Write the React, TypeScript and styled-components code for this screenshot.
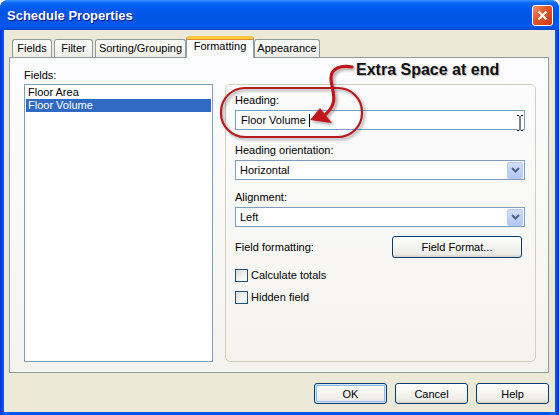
import React from "react";
import styled, { createGlobalStyle } from "styled-components";

const GlobalStyle = createGlobalStyle`
  html, body {
    margin: 0;
    padding: 0;
    background: #ffffff;
  }
  body {
    font-family: "Liberation Sans", Arial, sans-serif;
    font-size: 11px;
    color: #000;
  }
`;

const Window = styled.div`
  position: relative;
  width: 559px;
  height: 415px;
  display: flex;
  flex-direction: column;
  background: linear-gradient(90deg, #0831d9 0%, #166aee 1%, #0055e5 2%, #0055e5 98%, #166aee 99%, #0831d9 100%);
  border-radius: 8px 8px 0 0;
  overflow: hidden;
`;

const TitleBar = styled.div`
  flex: none;
  height: 30px;
  display: flex;
  align-items: center;
  justify-content: space-between;
  padding: 0 6px 0 7px;
  background: linear-gradient(
    180deg,
    #3d95ff 0%,
    #0a66f2 10%,
    #0058ee 30%,
    #0054e3 60%,
    #0058ee 90%,
    #0047c8 100%
  );
`;

const Title = styled.span`
  color: #fff;
  font: bold 13px "Liberation Sans", Arial, sans-serif;
  text-shadow: 1px 1px #0a1883;
`;

const CloseButton = styled.div`
  width: 21px;
  height: 21px;
  box-sizing: border-box;
  border: 1px solid #ffffff;
  border-radius: 3px;
  background: linear-gradient(135deg, #f0906c 0%, #e2542a 45%, #cc3a10 100%);
  display: flex;
  align-items: center;
  justify-content: center;
`;

const Client = styled.div`
  flex: 1;
  margin: 0 4px 3px 4px;
  background: #ece9d8;
  padding: 6px 6px 8px 5px;
  display: flex;
  flex-direction: column;
`;

const TabRow = styled.div`
  display: flex;
  align-items: flex-end;
  height: 21px;
  gap: 2px;
  padding-left: 3px;
  position: relative;
  z-index: 1;
`;

const Tab = styled.div<{ $w: number; $active?: boolean }>`
  width: ${(p) => p.$w}px;
  box-sizing: border-box;
  text-align: center;
  border: 1px solid #919b9c;
  border-bottom: none;
  border-radius: 3px 3px 0 0;
  ${(p) =>
    p.$active
      ? `
    height: 22px;
    margin: 0 -2px -1px -2px;
    background: #fcfcfe;
    border-top: 3px solid #ffc73c;
    box-shadow: inset 0 1px 0 #e68b2c;
    line-height: 15px;
  `
      : `
    height: 18px;
    background: linear-gradient(180deg, #ffffff 0%, #f7f7f3 50%, #ecebe6 100%);
    line-height: 17px;
  `}
`;

const Panel = styled.div`
  height: 316px;
  box-sizing: border-box;
  border: 1px solid #919b9c;
  background: linear-gradient(180deg, #fcfcfe 0%, #f8f8f6 50%, #f4f3ee 100%);
  padding: 11px 12px 10px 14px;
  display: grid;
  grid-template-columns: 189px 311px;
  grid-template-rows: 13px 1fr;
  column-gap: 12px;
  row-gap: 2px;
`;

const Label = styled.div`
  line-height: 13px;
  white-space: nowrap;
`;

const FieldList = styled.div`
  grid-column: 1;
  grid-row: 2;
  border: 1px solid #7f9db9;
  background: #fff;
  padding: 1px;
`;

const ListItem = styled.div<{ $selected?: boolean }>`
  height: 13px;
  line-height: 13px;
  padding-left: 2px;
  background: ${(p) => (p.$selected ? "#316ac5" : "transparent")};
  color: ${(p) => (p.$selected ? "#fff" : "#000")};
`;

const Group = styled.div`
  grid-column: 2;
  grid-row: 2;
  border: 1px solid #d0d0bf;
  border-radius: 5px;
  padding: 9px 10px 0 9px;
  display: flex;
  flex-direction: column;
`;

const GroupLabel = styled(Label)<{ $gap: number }>`
  margin-top: ${(p) => p.$gap}px;
`;

const TextInput = styled.div`
  margin-top: 3px;
  height: 20px;
  box-sizing: border-box;
  border: 1px solid #7f9db9;
  background: #fff;
  padding-left: 5px;
  display: flex;
  align-items: center;
`;

// the heading text ends in a space, so the caret sits one space away
const Caret = styled.span`
  display: inline-block;
  width: 1px;
  height: 13px;
  margin-left: 3px;
  background: #000;
`;

const Select = styled.div`
  margin-top: 3px;
  height: 20px;
  box-sizing: border-box;
  border: 1px solid #7f9db9;
  background: #fff;
  padding: 0 1px 0 4px;
  display: flex;
  align-items: center;
  justify-content: space-between;
`;

const DropButton = styled.div`
  width: 16px;
  height: 17px;
  box-sizing: border-box;
  border: 1px solid #b9caef;
  border-radius: 2px;
  background: linear-gradient(180deg, #d2defc 0%, #c1d3fb 50%, #b2c7f6 100%);
  display: flex;
  align-items: center;
  justify-content: center;
`;

const FormatRow = styled.div`
  margin-top: 9px;
  display: flex;
  align-items: center;
  justify-content: space-between;
  padding-right: 3px;
`;

const Button = styled.div<{ $w: number; $default?: boolean }>`
  width: ${(p) => p.$w}px;
  height: ${(p) => (p.$default !== undefined ? 21 : 22)}px;
  box-sizing: border-box;
  border: 1px solid #003c74;
  border-radius: 3px;
  background: linear-gradient(180deg, #ffffff 0%, #f5f5f1 45%, #ecebe6 85%, #d6d0c5 100%);
  display: flex;
  align-items: center;
  justify-content: center;
  box-shadow: ${(p) =>
    p.$default ? "inset 0 0 0 1px #cee7ff, inset 0 0 0 2px #98b8ea" : "none"};
`;

const CheckRow = styled.label<{ $gap: number }>`
  margin-top: ${(p) => p.$gap}px;
  display: flex;
  align-items: center;
  gap: 3px;
  line-height: 13px;
`;

const CheckBox = styled.span`
  width: 13px;
  height: 13px;
  box-sizing: border-box;
  border: 1px solid #1c5180;
  background: linear-gradient(135deg, #dcdcd7 0%, #f4f4f0 60%, #ffffff 100%);
`;

const ButtonRow = styled.div`
  margin-top: 10px;
  display: flex;
  justify-content: flex-end;
  gap: 8px;
`;

const Overlay = styled.svg`
  position: absolute;
  left: 0;
  top: 0;
  pointer-events: none;
`;

const Callout = styled.div`
  position: absolute;
  left: 356px;
  top: 60px;
  font: bold 16px/19px "Liberation Sans", Arial, sans-serif;
  color: #111;
  white-space: nowrap;
  text-shadow: 1px 1px 1px rgba(0, 0, 0, 0.25);
`;

const Chevron = () => (
  <svg width="9" height="6" viewBox="0 0 9 6">
    <path d="M1 1 L4.5 4.5 L8 1" fill="none" stroke="#4d6185" strokeWidth="2" />
  </svg>
);

const DropDown = ({ value }: { value: string }) => (
  <Select>
    <span>{value}</span>
    <DropButton>
      <Chevron />
    </DropButton>
  </Select>
);

export default function App() {
  return (
    <>
      <GlobalStyle />
      <Window>
        <TitleBar>
          <Title>Schedule Properties</Title>
          <CloseButton>
            <svg width="11" height="11" viewBox="0 0 11 11">
              <path d="M1.5 1.5 L9.5 9.5 M9.5 1.5 L1.5 9.5" stroke="#fff" strokeWidth="2.2" />
            </svg>
          </CloseButton>
        </TitleBar>
        <Client>
          <TabRow>
            <Tab $w={40}>Fields</Tab>
            <Tab $w={39}>Filter</Tab>
            <Tab $w={91}>Sorting/Grouping</Tab>
            <Tab $w={68} $active>
              Formatting
            </Tab>
            <Tab $w={66}>Appearance</Tab>
          </TabRow>
          <Panel>
            <Label>Fields:</Label>
            <FieldList>
              <ListItem>Floor Area</ListItem>
              <ListItem $selected>Floor Volume</ListItem>
            </FieldList>
            <Group>
              <GroupLabel $gap={0}>Heading:</GroupLabel>
              <TextInput>
                <span>Floor Volume</span>
                <Caret />
              </TextInput>
              <GroupLabel $gap={14}>Heading orientation:</GroupLabel>
              <DropDown value="Horizontal" />
              <GroupLabel $gap={11}>Alignment:</GroupLabel>
              <DropDown value="Left" />
              <FormatRow>
                <Label>Field formatting:</Label>
                <Button $w={130}>Field Format...</Button>
              </FormatRow>
              <CheckRow $gap={11}>
                <CheckBox />
                Calculate totals
              </CheckRow>
              <CheckRow $gap={9}>
                <CheckBox />
                Hidden field
              </CheckRow>
            </Group>
          </Panel>
          <ButtonRow>
            <Button $w={73} $default>
              OK
            </Button>
            <Button $w={73} $default={false}>
              Cancel
            </Button>
            <Button $w={73} $default={false}>
              Help
            </Button>
          </ButtonRow>
        </Client>

        <Overlay width="559" height="415" viewBox="0 0 559 415">
          <defs>
            <filter id="shadow" x="-10%" y="-10%" width="130%" height="140%">
              <feDropShadow dx="2" dy="2" stdDeviation="1.4" floodColor="#000" floodOpacity="0.35" />
            </filter>
          </defs>
          <g filter="url(#shadow)">
            <rect x="221" y="88" width="141" height="49" rx="24" fill="none" stroke="#b51a20" strokeWidth="2.2" />
            <path
              d="M352 67 C341 65 331 68 331 78 C331 90 340 101 326 114"
              fill="none"
              stroke="#c0161f"
              strokeWidth="3.2"
              strokeLinecap="round"
            />
            <polygon points="310,120 320,108 332,123" fill="#c0161f" />
          </g>
          <g stroke="#fff" strokeWidth="3">
            <path d="M517 115 h6 M520 115 v16 M517 131 h6" fill="none" />
          </g>
          <g stroke="#000" strokeWidth="1">
            <path d="M517 115.5 h2 M521 115.5 h2 M520 116 v14.5 M517 130.5 h2 M521 130.5 h2" fill="none" />
          </g>
        </Overlay>
        <Callout>Extra Space at end</Callout>
      </Window>
    </>
  );
}
